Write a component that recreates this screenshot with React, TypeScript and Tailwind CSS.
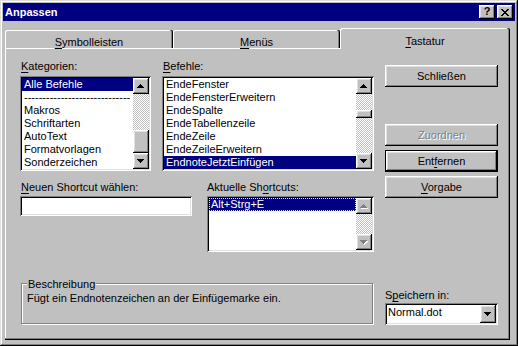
import React from "react";

const RAISED =
  "shadow-[inset_-1px_-1px_#000,inset_1px_1px_#fff,inset_-2px_-2px_#808080,inset_2px_2px_#dfdfdf]";
const SUNKEN =
  "shadow-[inset_1px_1px_#808080,inset_-1px_-1px_#fff,inset_2px_2px_#000,inset_-2px_-2px_#dfdfdf]";
const DITHER =
  "bg-[image:repeating-conic-gradient(#c0c0c0_0_25%,#ffffff_0_50%)] bg-[length:2px_2px]";

function U({ children }: { children: React.ReactNode }) {
  return <span className="underline underline-offset-[2px]">{children}</span>;
}

function Tri({ down, color }: { down?: boolean; color: string }) {
  const rows = down
    ? [
        [0, 7],
        [1, 5],
        [2, 3],
        [3, 1],
      ]
    : [
        [3, 1],
        [2, 3],
        [1, 5],
        [0, 7],
      ];
  return (
    <>
      {rows.map(([x, w], i) => (
        <rect key={i} x={x} y={i} width={w} height={1} fill={color} />
      ))}
    </>
  );
}

function Arrow({ down, disabled }: { down?: boolean; disabled?: boolean }) {
  return (
    <svg width="8" height="5" viewBox="0 0 8 5" shapeRendering="crispEdges">
      {disabled && (
        <g transform="translate(1,1)">
          <Tri down={down} color="#ffffff" />
        </g>
      )}
      <Tri down={down} color={disabled ? "#808080" : "#000000"} />
    </svg>
  );
}

function ScrollBtn({ down, disabled }: { down?: boolean; disabled?: boolean }) {
  return (
    <div className={`w-[16px] h-[16px] shrink-0 bg-[#c0c0c0] flex items-center justify-center ${RAISED}`}>
      <Arrow down={down} disabled={disabled} />
    </div>
  );
}

function VScroll({ thumbTop, thumbH, disabled }: { thumbTop?: number; thumbH?: number; disabled?: boolean }) {
  return (
    <div className="w-[16px] h-full flex flex-col shrink-0">
      <ScrollBtn disabled={disabled} />
      <div className={`flex-1 relative ${DITHER}`}>
        {thumbH ? (
          <div
            className={`absolute left-0 w-[16px] bg-[#c0c0c0] ${RAISED}`}
            style={{ top: thumbTop, height: thumbH }}
          />
        ) : null}
      </div>
      <ScrollBtn down disabled={disabled} />
    </div>
  );
}

function Row({ children, sel, focus }: { children: React.ReactNode; sel?: boolean; focus?: boolean }) {
  return (
    <div
      className={`h-[13px] leading-[13px] pl-[2px] whitespace-nowrap overflow-hidden ${
        sel ? "bg-[#000080] text-white" : ""
      } ${focus ? "outline-1 outline-dotted outline-[#ffff00] -outline-offset-1" : ""}`}
    >
      {children}
    </div>
  );
}

function Button({
  children,
  def,
  disabled,
}: {
  children: React.ReactNode;
  def?: boolean;
  disabled?: boolean;
}) {
  if (def) {
    return (
      <div className="w-[113px] h-[22px] border border-black bg-[#c0c0c0]">
        <div className={`w-full h-full flex items-center justify-center ${RAISED}`}>{children}</div>
      </div>
    );
  }
  return (
    <div
      className={`w-[113px] h-[22px] bg-[#c0c0c0] flex items-center justify-center ${RAISED} ${
        disabled ? "text-[#808080] [text-shadow:1px_1px_0_#fff]" : ""
      }`}
    >
      {children}
    </div>
  );
}

function TitleBtn({ children }: { children: React.ReactNode }) {
  return (
    <div className={`w-[16px] h-[14px] bg-[#c0c0c0] flex items-center justify-center ${RAISED}`}>
      {children}
    </div>
  );
}

function CloseGlyph() {
  const px: [number, number, number][] = [
    [0, 0, 2], [6, 0, 2],
    [1, 1, 2], [5, 1, 2],
    [2, 2, 4],
    [3, 3, 2],
    [2, 4, 4],
    [1, 5, 2], [5, 5, 2],
    [0, 6, 2], [6, 6, 2],
  ];
  return (
    <svg width="8" height="7" viewBox="0 0 8 7" shapeRendering="crispEdges">
      {px.map(([x, y, w], i) => (
        <rect key={i} x={x} y={y} width={w} height={1} fill="#000" />
      ))}
    </svg>
  );
}

export default function App() {
  const dashes = "-".repeat(29);
  return (
    <div
      className={`w-[518px] h-[346px] bg-[#c0c0c0] p-[3px] flex flex-col overflow-hidden font-['Liberation_Sans',Arial,sans-serif] text-[11px] leading-[13px] text-black shadow-[inset_-1px_-1px_#000,inset_1px_1px_#dfdfdf,inset_-2px_-2px_#808080,inset_2px_2px_#fff]`}
    >
      {/* Title bar */}
      <div className="h-[18px] shrink-0 bg-[#000080] flex items-center justify-between pl-[2px] pr-[2px]">
        <span className="text-white font-bold leading-[18px]">Anpassen</span>
        <div className="flex gap-[2px]">
          <TitleBtn>
            <span className="font-bold text-[11px] leading-[11px] -mt-[1px]">?</span>
          </TitleBtn>
          <TitleBtn>
            <CloseGlyph />
          </TitleBtn>
        </div>
      </div>

      {/* Tabs */}
      <div className="mt-[7px] ml-[2px] h-[20px] shrink-0 flex items-end relative z-10">
        <div className="w-[168px] h-[18px] rounded-t-[2px] pt-[6px] text-center shadow-[inset_-1px_0_#000,inset_-2px_0_#808080,inset_1px_1px_#fff]">
          <U>S</U>ymbolleisten
        </div>
        <div className="w-[167px] h-[18px] rounded-t-[2px] pt-[6px] text-center shadow-[inset_-1px_0_#000,inset_-2px_0_#808080,inset_1px_1px_#fff]">
          <U>M</U>enüs
        </div>
        <div className="w-[170px] h-[21px] -mb-[1px] bg-[#c0c0c0] rounded-t-[2px] pt-[7px] text-center shadow-[inset_-1px_0_#000,inset_-2px_0_#808080,inset_1px_1px_#fff]">
          <U>T</U>astatur
        </div>
      </div>

      {/* Panel */}
      <div className="ml-[2px] w-[505px] h-[292px] shrink-0 pt-[12px] pl-[15px] flex shadow-[inset_-1px_-1px_#000,inset_-2px_-2px_#808080,inset_1px_1px_#fff]">
        {/* Left block */}
        <div className="w-[354px] flex flex-col">
          <div className="flex items-start">
            <div className="w-[131px] flex flex-col">
              <div className="pl-[1px] h-[13px]">
                <U>K</U>ategorien:
              </div>
              <div className={`mt-[3px] w-[131px] h-[95px] bg-white p-[2px] flex ${SUNKEN}`}>
                <div className="flex-1 min-w-0">
                  <Row sel>Alle Befehle</Row>
                  <Row>{dashes}</Row>
                  <Row>Makros</Row>
                  <Row>Schriftarten</Row>
                  <Row>AutoText</Row>
                  <Row>Formatvorlagen</Row>
                  <Row>Sonderzeichen</Row>
                </div>
                <VScroll thumbTop={36} thumbH={23} />
              </div>
            </div>
            <div className="ml-[11px] w-[212px] flex flex-col">
              <div className="pl-[1px] h-[13px]">
                <U>B</U>efehle:
              </div>
              <div className={`mt-[3px] w-[212px] h-[95px] bg-white p-[2px] flex ${SUNKEN}`}>
                <div className="flex-1 min-w-0">
                  <Row>EndeFenster</Row>
                  <Row>EndeFensterErweitern</Row>
                  <Row>EndeSpalte</Row>
                  <Row>EndeTabellenzeile</Row>
                  <Row>EndeZeile</Row>
                  <Row>EndeZeileErweitern</Row>
                  <Row sel>EndnoteJetztEinfügen</Row>
                </div>
                <VScroll thumbTop={16} thumbH={8} />
              </div>
            </div>
          </div>

          <div className="mt-[10px] flex items-start">
            <div className="w-[172px] flex flex-col">
              <div className="pl-[1px] h-[13px]">
                <U>N</U>euen Shortcut wählen:
              </div>
              <div className={`mt-[2px] w-[172px] h-[20px] bg-white ${SUNKEN}`} />
            </div>
            <div className="ml-[15px] w-[167px] flex flex-col">
              <div className="h-[13px]">
                Aktuelle Sh<U>o</U>rtcuts:
              </div>
              <div className={`mt-[2px] w-[167px] h-[56px] bg-white p-[2px] flex ${SUNKEN}`}>
                <div className="flex-1 min-w-0">
                  <Row sel focus>
                    Alt+Strg+E
                  </Row>
                </div>
                <VScroll disabled />
              </div>
            </div>
          </div>

          <div className="mt-[31px] ml-[1px] w-[352px] h-[41px] relative border border-[#808080] shadow-[inset_1px_1px_#fff,1px_1px_#fff] pt-[8px] pl-[5px]">
            <span className="absolute left-[5px] top-[-6px] px-[1px] bg-[#c0c0c0] h-[13px]">Beschreibung</span>
            <div className="h-[13px] whitespace-nowrap">Fügt ein Endnotenzeichen an der Einfügemarke ein.</div>
          </div>
        </div>

        {/* Right block */}
        <div className="ml-[11px] w-[113px] flex flex-col">
          <div className="mt-[5px]">
            <Button>Schließen</Button>
          </div>
          <div className="mt-[37px]">
            <Button disabled>Zuordnen</Button>
          </div>
          <div className="mt-[4px]">
            <Button def>
              <span>
                Ent<U>f</U>ernen
              </span>
            </Button>
          </div>
          <div className="mt-[4px]">
            <Button>
              <span>
                <U>V</U>orgabe
              </span>
            </Button>
          </div>
          <div className="mt-[91px] h-[13px]">
            S<U>p</U>eichern in:
          </div>
          <div className={`mt-[1px] w-[113px] h-[22px] bg-white p-[2px] flex ${SUNKEN}`}>
            <div className="flex-1 pl-[1px] pt-[1px] leading-[13px]">Normal.dot</div>
            <div className={`w-[16px] h-[18px] bg-[#c0c0c0] flex items-center justify-center ${RAISED}`}>
              <Arrow down />
            </div>
          </div>
        </div>
      </div>
    </div>
  );
}
